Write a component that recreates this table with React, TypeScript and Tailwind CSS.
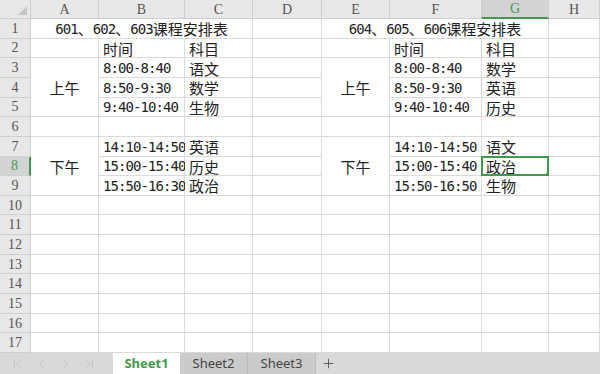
import { ChevronFirst, ChevronLast, ChevronLeft, ChevronRight, Plus } from "lucide-react";

const COLS = ["A", "B", "C", "D", "E", "F", "G", "H"];
const ROW_COUNT = 17;

// merged ranges: origin cell, row span, col span
const merges: Record<string, { rs: number; cs: number }> = {
  A1: { rs: 1, cs: 3 },
  E1: { rs: 1, cs: 3 },
  A3: { rs: 3, cs: 1 },
  A7: { rs: 3, cs: 1 },
  E3: { rs: 3, cs: 1 },
  E7: { rs: 3, cs: 1 },
};

const values: Record<string, string> = {
  A1: "601、602、603课程安排表",
  B2: "时间",
  C2: "科目",
  A3: "上午",
  B3: "8:00-8:40",
  C3: "语文",
  B4: "8:50-9:30",
  C4: "数学",
  B5: "9:40-10:40",
  C5: "生物",
  A7: "下午",
  B7: "14:10-14:50",
  C7: "英语",
  B8: "15:00-15:40",
  C8: "历史",
  B9: "15:50-16:30",
  C9: "政治",
  E1: "604、605、606课程安排表",
  F2: "时间",
  G2: "科目",
  E3: "上午",
  F3: "8:00-8:40",
  G3: "数学",
  F4: "8:50-9:30",
  G4: "英语",
  F5: "9:40-10:40",
  G5: "历史",
  E7: "下午",
  F7: "14:10-14:50",
  G7: "语文",
  F8: "15:00-15:40",
  G8: "政治",
  F9: "15:50-16:50",
  G9: "生物",
};

const ACTIVE_COL = "G";
const ACTIVE_ROW = 8;

function covered(col: number, row: number) {
  for (const key of Object.keys(merges)) {
    const c = COLS.indexOf(key[0]);
    const r = Number(key.slice(1));
    const m = merges[key];
    if (col >= c && col < c + m.cs && row >= r && row < r + m.rs && !(col === c && row === r)) {
      return true;
    }
  }
  return false;
}

// half-width runs get a narrow mono face, full-width runs the CJK face
function Rich({ text }: { text: string }) {
  const parts = text.split(/([\x20-\x7e]+)/).filter(Boolean);
  return (
    <>
      {parts.map((p, i) =>
        /^[\x20-\x7e]+$/.test(p) ? (
          <span key={i} className="font-['DejaVu_Sans_Mono',monospace] text-[14px] tracking-[-0.93px]">
            {p}
          </span>
        ) : (
          <span key={i} className="text-[15px]">
            {p}
          </span>
        ),
      )}
    </>
  );
}

function Cell({ col, row }: { col: number; row: number }) {
  const key = `${COLS[col]}${row}`;
  const merge = merges[key];
  const text = values[key];
  const active = key === `${ACTIVE_COL}${ACTIVE_ROW}`;

  return (
    <div
      className={
        merge
          ? "relative flex items-center justify-center whitespace-nowrap border-r border-b border-[#dadada] bg-white pt-px text-[#222]"
          : "relative flex items-center whitespace-nowrap border-r border-b border-[#dadada] bg-white pl-1 pt-px text-[#222]"
      }
      style={{
        gridColumn: `${col + 2} / span ${merge?.cs ?? 1}`,
        gridRow: `${row + 1} / span ${merge?.rs ?? 1}`,
      }}
    >
      {text ? <Rich text={text} /> : null}
      {active ? (
        <div className="absolute -top-px -left-px -right-px -bottom-px border-2 border-[#3f9a4f]">
          <div className="absolute -right-[4px] -bottom-[4px] h-[5px] w-[5px] bg-[#3f9a4f]" />
        </div>
      ) : null}
    </div>
  );
}

export default function App() {
  const rows = Array.from({ length: ROW_COUNT }, (_, i) => i + 1);

  return (
    <div className="flex h-[374px] w-[600px] flex-col overflow-hidden bg-white font-['Noto_Sans_CJK_SC',sans-serif] leading-none">
      <div className="grid h-[353px] grid-cols-[31px_68px_86px_68px_69px_68px_92px_67px_1fr] grid-rows-[19px_repeat(17,minmax(0,1fr))]">
        {/* corner */}
        <div className="relative border-r border-b border-[#cfcfcf] bg-[#e8e8e8]">
          <svg className="absolute right-[3px] bottom-[3px]" width="9" height="9" viewBox="0 0 9 9">
            <path d="M9 0 L9 9 L0 9 Z" fill="#c6c6c6" />
          </svg>
        </div>

        {/* column headers */}
        {COLS.map((c) =>
          c === ACTIVE_COL ? (
            <div
              key={c}
              className="flex items-center justify-center border-r border-b-2 border-r-[#cfcfcf] border-b-[#3f9a4f] bg-[#d3d3d3] pt-px font-['Liberation_Serif',serif] text-[14px] text-[#3f9a4f]"
            >
              {c}
            </div>
          ) : (
            <div
              key={c}
              className="flex items-center justify-center border-r border-b border-[#cfcfcf] bg-[#e8e8e8] pt-px font-['Liberation_Serif',serif] text-[14px] text-[#555]"
            >
              {c}
            </div>
          ),
        )}

        {rows.map((r) => (
          <div key={r} className="contents">
            {r === ACTIVE_ROW ? (
              <div className="flex items-center justify-center border-r-2 border-b border-r-[#3f9a4f] border-b-[#cfcfcf] bg-[#d3d3d3] pt-px font-['Liberation_Serif',serif] text-[14px] text-[#3f9a4f]">
                {r}
              </div>
            ) : (
              <div className="flex items-center justify-center border-r border-b border-[#cfcfcf] bg-[#e8e8e8] pt-px font-['Liberation_Serif',serif] text-[14px] text-[#555]">
                {r}
              </div>
            )}
            {COLS.map((_, ci) => (covered(ci, r) ? null : <Cell key={ci} col={ci} row={r} />))}
          </div>
        ))}
      </div>

      {/* sheet tabs */}
      <div className="flex h-[21px] items-stretch bg-[#d9d9d9] font-['Noto_Sans','Liberation_Sans',sans-serif] text-[13px]">
        <div className="flex w-[113px] items-center gap-[9px] pl-[10px] text-[#bdbdbd]">
          <ChevronFirst size={15} strokeWidth={1.2} />
          <ChevronLeft size={15} strokeWidth={1.2} />
          <ChevronRight size={15} strokeWidth={1.2} />
          <ChevronLast size={15} strokeWidth={1.2} />
        </div>
        <div className="flex w-[67px] items-center justify-center bg-white font-bold text-[#3f9a4f]">Sheet1</div>
        <div className="flex w-[68px] items-center justify-center border-r border-[#bdbdbd] bg-[#cbcbcb] text-[#444]">
          Sheet2
        </div>
        <div className="flex w-[68px] items-center justify-center border-r border-[#bdbdbd] bg-[#cbcbcb] text-[#444]">
          Sheet3
        </div>
        <div className="flex w-[24px] items-center justify-center text-[#444]">
          <Plus size={15} strokeWidth={1.3} />
        </div>
      </div>
    </div>
  );
}
